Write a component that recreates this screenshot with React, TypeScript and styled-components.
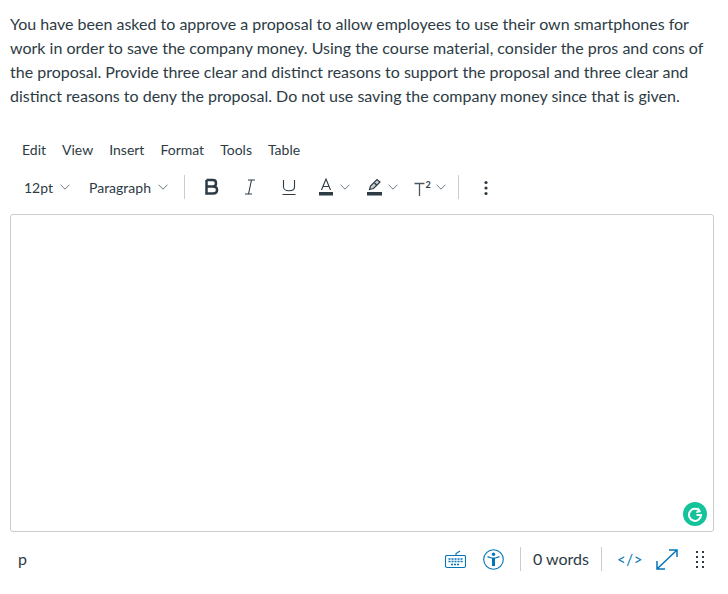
import React from "react";
import styled, { createGlobalStyle } from "styled-components";

const Global = createGlobalStyle`
  html, body { margin: 0; padding: 0; background: #fff; }
  body { font-family: Lato, "Liberation Sans", sans-serif; color: #2d3b45; }
`;
const Page = styled.div`
  width: 728px; height: 594px; box-sizing: border-box; padding: 12px 14px 0 10px; overflow: hidden;
`;
const Prompt = styled.p`
  margin: 0; font-size: 16px; line-height: 24px; color: #2d3b45; white-space: nowrap;
`;
const MenuBar = styled.div`
  display: flex; gap: 16px; margin-top: 31px; padding-left: 12px; height: 20px; align-items: center;
  font-size: 14px; color: #2d3b45;
`;
const Toolbar = styled.div`
  display: flex; align-items: center; height: 26px; margin-top: 15px; padding-left: 14px; font-size: 14px;
`;
const Select = styled.span<{ $w: number }>`
  display: flex; align-items: center; gap: 7px; width: ${p => p.$w}px; color: #2d3b45;
`;
const Divider = styled.span<{ $h?: number; $mx?: string }>`
  display: block; width: 1px; height: ${p => p.$h ?? 24}px; background: #c7cdd1; margin: ${p => p.$mx ?? "0"};
`;
const IconSlot = styled.span<{ $w: number; $pl?: number }>`
  display: flex; align-items: center; box-sizing: border-box; flex: none;
  width: ${p => p.$w}px; padding-left: ${p => p.$pl ?? 0}px;
`;
const MoreIcon = styled.svg`
  flex: none; margin-top: 2px;
`;
const Editor = styled.div`
  position: relative; height: 318px; margin-top: 14px; box-sizing: border-box;
  border: 1px solid #c7cdd1; border-radius: 3px; background: #fff;
`;
const Badge = styled.div`
  position: absolute; right: 6px; bottom: 5px; width: 24px; height: 24px; border-radius: 50%;
  background: #15c39a; display: flex; align-items: center; justify-content: center;
`;
const StatusBar = styled.div`
  display: flex; align-items: center; height: 30px; margin-top: 12px; padding: 0 10px 0 8px;
`;
const Path = styled.span`
  font-size: 16px; color: #2d3b45; flex: 1; padding-bottom: 2px;
`;
const Words = styled.span`
  font-size: 16px; color: #2d3b45; margin: 0 12px; padding-bottom: 2px;
`;
const CodeToggle = styled.span`
  font-size: 15px; color: #0374b5; letter-spacing: 0.6px; width: 39px; margin-left: 15px;
`;
const KeyboardIcon = styled.svg`
  flex: none;
`;
const AccessIcon = styled.svg`
  flex: none; margin-left: 17px;
`;
const GripIcon = styled.svg`
  flex: none; margin-left: 18px;
`;

const Chevron = () => (
  <svg width="10" height="6" viewBox="0 0 10 6" fill="none" stroke="#5b6b76" strokeWidth="0.9">
    <path d="M0.5 0.7 L5 5.2 L9.5 0.7" />
  </svg>
);

export default function App() {
  return (
    <Page>
      <Global />
      <Prompt>
        You have been asked to approve a proposal to allow employees to use their own smartphones for<br />
        work in order to save the company money. Using the course material, consider the pros and cons of<br />
        the proposal. Provide three clear and distinct reasons to support the proposal and three clear and<br />
        distinct reasons to deny the proposal. Do not use saving the company money since that is given.
      </Prompt>
      <MenuBar>
        <span>Edit</span><span>View</span><span>Insert</span><span>Format</span><span>Tools</span><span>Table</span>
      </MenuBar>
      <Toolbar>
        <Select $w={65}>12pt <Chevron /></Select>
        <Select $w={95}>Paragraph <Chevron /></Select>
        <Divider $h={24} $mx="0 19px 0 0" />
        <IconSlot $w={40}>
          <svg width="16" height="18" viewBox="0 0 16 18" fill="none" stroke="#2d3b45" strokeWidth="2.5">
            <path d="M2.5 2 H9 C13 2 13 8.4 9 8.4 H2.5 M9 8.4 C14.4 8.4 14.4 15.4 9 15.4 H2.5 V2" />
          </svg>
        </IconSlot>
        <IconSlot $w={38}>
          <svg width="12" height="16" viewBox="0 0 12 16" fill="none" stroke="#2d3b45" strokeWidth="1.1">
            <path d="M4 1 H11 M1 15 H8 M7.5 1 L4.5 15" />
          </svg>
        </IconSlot>
        <IconSlot $w={37}>
          <svg width="14" height="17" viewBox="0 0 14 17" fill="none" stroke="#2d3b45" strokeWidth="1.1">
            <path d="M1.5 1 V8 C1.5 13 12.5 13 12.5 8 V1 M0.5 15.5 H13.5" />
          </svg>
        </IconSlot>
        <IconSlot $w={14}>
          <svg width="14" height="18" viewBox="0 0 14 18" fill="none" stroke="#2d3b45" strokeWidth="1.1">
            <path d="M2.5 12 L7 1 L11.5 12 M4 8.5 H10" />
            <rect x="0" y="14" width="14" height="3.5" fill="#2d3b45" stroke="none" />
          </svg>
        </IconSlot>
        <IconSlot $w={34} $pl={7}><Chevron /></IconSlot>
        <IconSlot $w={15}>
          <svg width="15" height="18" viewBox="0 0 15 18" fill="none" stroke="#2d3b45" strokeWidth="1.2">
            <path d="M2.5 11.5 L3.5 8 L10 1.5 L13 4 L6.5 10.5 Z" fill="#2d3b45" fillOpacity="0.25" />
            <path d="M7.5 5 L10 7.5" />
            <rect x="0" y="14" width="15" height="3.5" fill="#2d3b45" stroke="none" />
          </svg>
        </IconSlot>
        <IconSlot $w={32} $pl={6}><Chevron /></IconSlot>
        <IconSlot $w={22}>
          <svg width="18" height="18" viewBox="0 0 18 18" fill="none" stroke="#4a5963" strokeWidth="1.3">
            <path d="M0.5 5.5 H10.5 M5.5 5.5 V18" />
            <text x="11.5" y="9.5" fontSize="9" fontWeight="700" fill="#2d3b45" stroke="none" fontFamily="Lato, sans-serif">2</text>
          </svg>
        </IconSlot>
        <IconSlot $w={22}><Chevron /></IconSlot>
        <Divider $h={24} $mx="0 25px 0 0" />
        <MoreIcon width="4" height="16" viewBox="0 0 4 16" fill="#2d3b45">
          <circle cx="2" cy="2.5" r="1.6" /><circle cx="2" cy="8" r="1.6" /><circle cx="2" cy="13.5" r="1.6" />
        </MoreIcon>
      </Toolbar>
      <Editor>
        <Badge>
          <svg width="16" height="16" viewBox="0 0 16 16" fill="none" stroke="#fff" strokeWidth="2">
            <path d="M12.6 5 A6 6 0 1 0 14 9 H9.5" />
            <path d="M10.8 1.8 L13 5.4 L9.2 6.2" strokeWidth="1.4" />
          </svg>
        </Badge>
      </Editor>
      <StatusBar>
        <Path>p</Path>
        <KeyboardIcon width="21" height="20" viewBox="0 0 21 20" fill="none" stroke="#0374b5" strokeWidth="1.1">
          <rect x="0.5" y="6.5" width="20" height="12" rx="1.5" />
          <path d="M11 6.5 V4.5 L15 2" />
          <path d="M3.5 10 H17.5 M3.5 12.5 H17.5 M6 15.5 H15" strokeWidth="1.6" strokeDasharray="2 1" />
        </KeyboardIcon>
        <AccessIcon width="21" height="21" viewBox="0 0 21 21" fill="none" stroke="#0374b5" strokeWidth="1.1">
          <circle cx="10.5" cy="10.5" r="9.8" />
          <circle cx="10.5" cy="5.2" r="1.7" fill="#0374b5" stroke="none" />
          <path d="M4.5 7.6 L8.5 9 H12.5 L16.5 7.6" strokeWidth="1.2" />
          <path d="M9 9 H12 V17 H9 Z" fill="#0374b5" stroke="none" />
        </AccessIcon>
        <Divider $h={24} $mx="0 0 0 16px" />
        <Words>0 words</Words>
        <Divider $h={24} />
        <CodeToggle>&lt;/&gt;</CodeToggle>
        <svg width="22" height="21" viewBox="0 0 22 21" fill="none" stroke="#0374b5" strokeWidth="1.5">
          <path d="M1 20 L21 1 M13 1 H21 V8 M1 12 V20 H9" />
        </svg>
        <GripIcon width="8" height="18" viewBox="0 0 8 18" fill="#2d3b45">
          {[2, 7, 12, 17].map(y => (
            <React.Fragment key={y}>
              <rect x="0" y={y - 1} width="2" height="2" />
              <rect x="6" y={y - 1} width="2" height="2" />
            </React.Fragment>
          ))}
        </GripIcon>
      </StatusBar>
    </Page>
  );
}
